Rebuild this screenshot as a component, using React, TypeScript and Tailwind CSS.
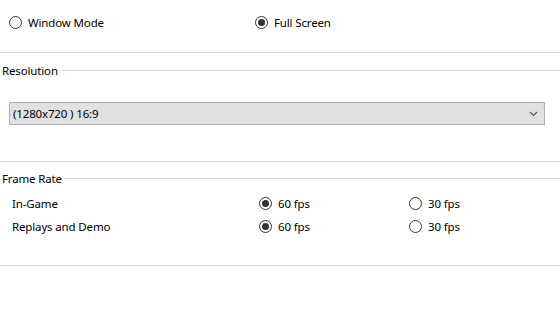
import React from "react";

function Radio({ checked, label }: { checked?: boolean; label: string }) {
  return (
    <div className="flex items-center h-4">
      <div className="w-[13px] h-[13px] rounded-full border border-[#333333] flex items-center justify-center bg-white">
        {checked && <div className="w-[7px] h-[7px] rounded-full bg-[#333333]" />}
      </div>
      <span className="ml-[6px] leading-4 pt-px">{label}</span>
    </div>
  );
}

function GroupHeader({ label }: { label: string }) {
  return (
    <div className="flex items-center h-4 pl-[2px]">
      <span className="leading-4 pt-px">{label}</span>
      <div className="flex-1 h-px bg-[#dcdcdc] ml-[2px]" />
    </div>
  );
}

export default function App() {
  return (
    <div
      className="w-[560px] h-[335px] bg-white text-[11.5px] tracking-[-0.15px] text-[#000000] overflow-hidden"
      style={{ fontFamily: '"Noto Sans", "Open Sans", sans-serif' }}
    >
      <div className="h-[52px] pt-[14px] flex">
        <div className="pl-[9px] w-[255px]">
          <Radio label="Window Mode" />
        </div>
        <div>
          <Radio checked label="Full Screen" />
        </div>
      </div>
      <div className="h-px bg-[#dcdcdc]" />

      <div className="mt-[9px]">
        <GroupHeader label="Resolution" />
      </div>
      <div className="mt-[24px] ml-[9px] w-[536px] h-[23px] border border-[#adadad] bg-[#e1e1e1] flex items-center justify-between pl-[3px] pr-[6px]">
        <span className="leading-4 pt-px">(1280x720 ) 16:9</span>
        <svg width="9" height="6" viewBox="0 0 9 6">
          <path d="M1 1 L4.5 4.5 L8 1" fill="none" stroke="#555555" strokeWidth="1.2" />
        </svg>
      </div>
      <div className="mt-[36px] h-px bg-[#dcdcdc]" />

      <div className="mt-[8px]">
        <GroupHeader label="Frame Rate" />
      </div>
      <div className="mt-[9px] flex flex-col gap-[7px]">
        <div className="flex items-center h-4">
          <div className="pl-[12px] w-[259px] leading-4 pt-px">In-Game</div>
          <div className="w-[150px]">
            <Radio checked label="60 fps" />
          </div>
          <Radio label="30 fps" />
        </div>
        <div className="flex items-center h-4">
          <div className="pl-[12px] w-[259px] leading-4 pt-px">Replays and Demo</div>
          <div className="w-[150px]">
            <Radio checked label="60 fps" />
          </div>
          <Radio label="30 fps" />
        </div>
      </div>
      <div className="mt-[31px] h-px bg-[#dcdcdc]" />
    </div>
  );
}
